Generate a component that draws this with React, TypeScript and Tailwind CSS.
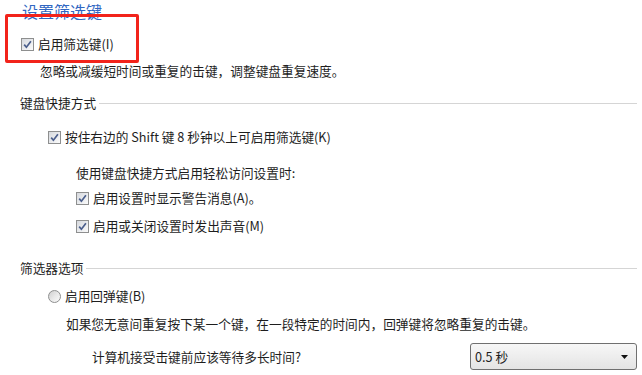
import React from 'react';

// Win7-style small checkbox
const Check: React.FC = () => (
  <span className="flex h-[13px] w-[13px] shrink-0 items-center justify-center border border-[#8e8f8f] bg-gradient-to-br from-[#d6d9de] to-[#fbfbfb]">
    <svg width="9" height="9" viewBox="0 0 9 9">
      <path d="M1.2 4.6 L3.4 7.2 L7.9 1.2" fill="none" stroke="#4a5e8c" strokeWidth="1.7" />
    </svg>
  </span>
);

const Radio: React.FC = () => (
  <span className="block h-[13px] w-[13px] shrink-0 rounded-full border border-[#8e8f8f] bg-gradient-to-br from-[#cfcfcf] via-[#e8e8e8] to-[#fbfbfb]" />
);

const GroupHeader: React.FC<{ label: string; className?: string }> = ({ label, className = '' }) => (
  <div className={`flex h-[20px] items-center pl-[20px] pr-[5px] ${className}`}>
    <span>{label}</span>
    <span className="ml-[3px] h-px flex-1 bg-[#d5d5d5]" />
  </div>
);

const CheckRow: React.FC<{ label: string; className?: string }> = ({ label, className = '' }) => (
  <div className={`flex h-[20px] items-center gap-[4px] ${className}`}>
    <Check />
    <span>{label}</span>
  </div>
);

export default function App() {
  return (
    <div
      className="relative h-[375px] w-[642px] overflow-hidden bg-white text-[12.7px] leading-[20px] text-[#1e1e1e]"
      style={{ fontFamily: '"Noto Sans CJK SC", "Noto Sans", sans-serif' }}
    >
      {/* annotation box drawn over the first option */}
      <div className="absolute left-[5px] top-[14px] h-[49px] w-[134px] rounded-[2px] border-[3px] border-[#f2231b]" />

      <div className="h-[20px] pt-px pl-[22px] text-[16px] leading-[20px] text-[#3167c2]">设置筛选键</div>

      <CheckRow label="启用筛选键(I)" className="mt-[14px] pl-[21px]" />
      <div className="mt-[7px] h-[20px] pl-[40px]">忽略或减缓短时间或重复的击键，调整键盘重复速度。</div>

      <GroupHeader label="键盘快捷方式" className="mt-[12px]" />
      <CheckRow label="按住右边的 Shift 键 8 秒钟以上可启用筛选键(K)" className="mt-[14px] pl-[48px]" />

      <div className="mt-[16px] h-[20px] pl-[76px]">使用键盘快捷方式启用轻松访问设置时:</div>
      <CheckRow label="启用设置时显示警告消息(A)。" className="mt-[5px] pl-[76px]" />
      <CheckRow label="启用或关闭设置时发出声音(M)" className="mt-[8px] pl-[76px]" />

      <GroupHeader label="筛选器选项" className="mt-[22px]" />
      <div className="mt-[8px] flex h-[20px] items-center gap-[4px] pl-[48px]">
        <Radio />
        <span>启用回弹键(B)</span>
      </div>
      <div className="mt-[8px] h-[20px] pl-[66px]">
        如果您无意间重复按下某一个键，在一段特定的时间内，回弹键将忽略重复的击键。
      </div>

      <div className="mt-[9px] flex h-[27px] items-center pr-[5px] pl-[92px]">
        <span className="flex-1">计算机接受击键前应该等待多长时间?</span>
        <div className="flex h-[27px] w-[167px] items-center justify-between rounded-[3px] border border-[#707070] bg-gradient-to-b from-[#f7f7f7] to-[#e4e4e4] pr-[8px] pl-[4px]">
          <span>0.5 秒</span>
          <svg width="7" height="4" viewBox="0 0 7 4">
            <path d="M0 0 H7 L3.5 4 Z" fill="#111" />
          </svg>
        </div>
      </div>
    </div>
  );
}
